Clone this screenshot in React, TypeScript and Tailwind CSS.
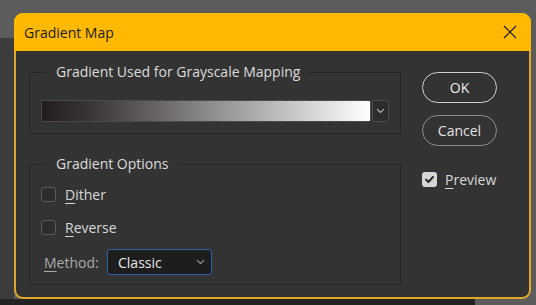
import type { ReactNode } from "react";

function Key({ children }: { children: ReactNode }) {
  return <span className="underline underline-offset-[3px] decoration-1">{children}</span>;
}

function Checkbox({ checked }: { checked?: boolean }) {
  if (checked) {
    return (
      <span className="w-[15px] h-[15px] rounded-[3px] bg-[#d6d6d6] flex items-center justify-center shrink-0">
        <svg width="11" height="11" viewBox="0 0 11 11">
          <path d="M2 5.6 L4.4 8 L9 3" fill="none" stroke="#2a2a2a" strokeWidth="2" strokeLinecap="round" strokeLinejoin="round" />
        </svg>
      </span>
    );
  }
  return <span className="w-[15px] h-[15px] rounded-[3px] border border-[#5a5a5a] bg-[#2d2d2d] shrink-0" />;
}

function Chevron({ color = "#b8b8b8" }: { color?: string }) {
  return (
    <svg width="9" height="6" viewBox="0 0 9 6">
      <path d="M1 1.2 L4.5 4.5 L8 1.2" fill="none" stroke={color} strokeWidth="1.1" />
    </svg>
  );
}

function Group({ title, className, children }: { title: string; className?: string; children: ReactNode }) {
  return (
    <fieldset className={`border border-[#262626] ${className ?? ""}`}>
      <legend className="ml-[17px] px-[9px] text-[14px] leading-[20px] text-[#dcdcdc]">{title}</legend>
      {children}
    </fieldset>
  );
}

function Dialog() {
  return (
    <div className="w-[517px] h-[286px] rounded-[9px] bg-[#e2a62a] flex flex-col overflow-hidden">
      {/* 标题栏 */}
      <div className="h-[38px] shrink-0 bg-[#ffb900] flex items-center pl-[10px] pr-[14px]">
        <span className="text-[14px] text-[#1b1b1b] flex-1">Gradient Map</span>
        <svg width="14" height="14" viewBox="0 0 14 14">
          <path d="M1 1 L13 13 M13 1 L1 13" stroke="#1b1b1b" strokeWidth="1.2" />
        </svg>
      </div>

      {/* 内容 */}
      <div className="flex-1 mx-[2px] mb-[2px] rounded-b-[7px] bg-[#333333] flex items-start pt-[11px] pl-[13px]">
        <div className="w-[372px] flex flex-col">
          <Group title="Gradient Used for Grayscale Mapping" className="h-[72px]">
            <div className="flex mt-[18px] ml-[11px]">
              <div className="w-[330px] h-[22px] rounded-[2px] border border-[#4a4a4a] bg-[linear-gradient(to_right,#221c1e_0%,#3a3536_15%,#ffffff_100%)]" />
              <div className="w-[17px] h-[22px] ml-px rounded-[2px] border border-[#4c4c4c] bg-[#2c2c2c] flex items-center justify-center">
                <Chevron />
              </div>
            </div>
          </Group>

          <Group title="Gradient Options" className="h-[131px] mt-[20px]">
            <div className="flex flex-col pl-[11px] pt-[10px] text-[14px] text-[#d8d8d8]">
              <label className="h-[20px] flex items-center gap-[9px]">
                <Checkbox />
                <span><Key>D</Key>ither</span>
              </label>
              <label className="h-[20px] mt-[13px] flex items-center gap-[9px]">
                <Checkbox />
                <span><Key>R</Key>everse</span>
              </label>
              <div className="h-[26px] mt-[12px] flex items-center">
                <span className="ml-[3px] w-[63px] text-[#a9a9a9]"><Key>M</Key>ethod:</span>
                <div className="w-[105px] h-[26px] rounded-[3px] border border-[#2f63a8] bg-[#1d1d1d] flex items-center pl-[10px] pr-[6px]">
                  <span className="flex-1 text-[#e6e6e6]">Classic</span>
                  <Chevron color="#9a9a9a" />
                </div>
              </div>
            </div>
          </Group>
        </div>

        <div className="ml-[21px] mt-[10px] w-[75px] flex flex-col">
          <button className="h-[31px] rounded-full border-[1.5px] border-[#cfcfcf] text-[14px] text-[#eeeeee]">OK</button>
          <button className="h-[31px] mt-[12px] rounded-full border border-[#8c8c8c] text-[14px] text-[#e2e2e2]">Cancel</button>
          <label className="mt-[23px] flex items-center gap-[8px] text-[14px] text-[#d8d8d8]">
            <Checkbox checked />
            <span><Key>P</Key>review</span>
          </label>
        </div>
      </div>
    </div>
  );
}

export default function App() {
  return (
    <div className="w-[536px] h-[305px] overflow-hidden bg-[#5c5c5c] flex flex-col font-['Open_Sans',sans-serif]">
      <div className="h-[13px] shrink-0" />
      <div className="flex h-[286px] shrink-0">
        <div className="w-[14px] mt-[25px] bg-[#3c3c3c]" />
        <Dialog />
      </div>
      <div className="flex flex-1">
        <div className="w-[475px] bg-[#232323]" />
      </div>
    </div>
  );
}
